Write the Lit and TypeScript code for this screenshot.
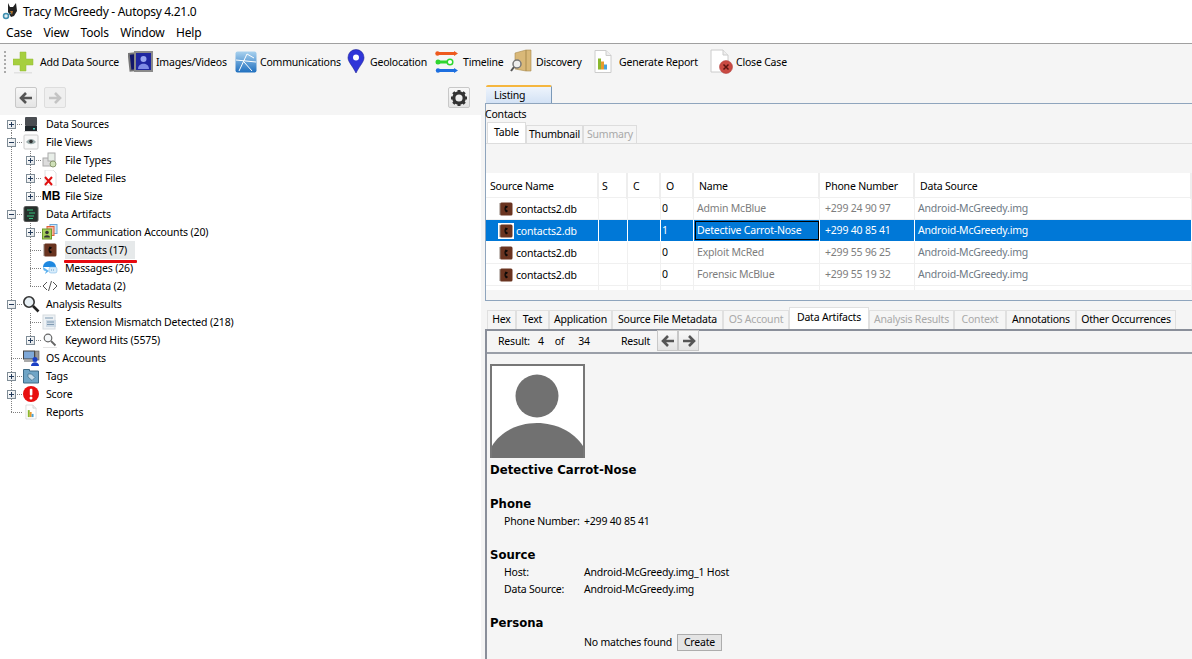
import { LitElement, html, css, svg } from 'lit';
import { customElement } from 'lit/decorators.js';

const page = (inner: unknown, w = 16, h = 16) => html`<svg width=${w} height=${h} viewBox="0 0 22 24">
  <path d="M3 1h11l5 5v17H3z" fill="#fff" stroke="#ccc"/><path d="M14 1v5h5" fill="#eee" stroke="#ccc"/>${inner}</svg>`;

const bars = svg`<rect x="6" y="9" width="3" height="11" fill="#8ab82e"/><rect x="9" y="12" width="3" height="8" fill="#e89a2c"/><rect x="12" y="15" width="3" height="5" fill="#4aa3d8"/>`;

const book = html`<svg width="14" height="14" viewBox="0 0 14 14">
  <rect x="1" y="0.500" width="12.500" height="13" rx="1.500" fill="#6a3420"/><path d="M1 1.500v11" stroke="#8d8078" stroke-width="2" stroke-dasharray="1 1"/>
  <path d="M6.500 3.500c-1.500 2.300-1.500 4.500.5 7l2-1.200-1.200-1.700-.8.300c-.3-.7-.3-1.400 0-2l.8.300 1.200-1.700z" fill="#0d0a08"/></svg>`;

const ICONS: Record<string, unknown> = {
  dog: html`<svg width="18" height="18" viewBox="0 0 18 18">
    <path d="M6 1l2 4h3l3-4 1 8-3 5-3 1-3-5z" fill="#222"/><path d="M8 9l3 0-1 4z" fill="#b5772f"/>
    <circle cx="4" cy="14" r="2.500" fill="#dcecf2" stroke="#3f8fb0" stroke-width="1.500"/><path d="M6 13l3-2" stroke="#3f8fb0"/></svg>`,
  plus: html`<svg width="21" height="24" viewBox="0 0 21 24">
    <path d="M7 2h6v7h7v6h-7v6H7v-6H0V9h7z" fill="#a6cf3f" stroke="#93b935" stroke-width=".5"/><rect x="1" y="22" width="18" height="1.500" fill="#e2e2e2"/></svg>`,
  images: html`<svg width="25" height="25" viewBox="0 0 25 25">
    <rect x="1.500" y="4" width="15" height="17" fill="#12166a" stroke="#777" stroke-width="2" transform="rotate(-6 9 12)"/>
    <rect x="7" y="3" width="17" height="19" fill="#1f26a0" stroke="#8a8a8a" stroke-width="2"/>
    <circle cx="15.500" cy="10" r="3" fill="#9aa6f0"/><path d="M10 20c0-7 11-7 11 0z" fill="#7f8be6"/></svg>`,
  comm: html`<svg width="22" height="22" viewBox="0 0 22 22">
    <defs><linearGradient id="cg" x1="0" y1="0" x2="0" y2="1"><stop offset="0" stop-color="#a9d2ef"/><stop offset="1" stop-color="#1f6fbf"/></linearGradient></defs>
    <rect x="0.500" y="0.500" width="21" height="21" rx="2" fill="url(#cg)"/>
    <path d="M4 20L12 3M1 9l20 2M9 11l8 9M12 3l7 4" stroke="#fff" stroke-width="1" fill="none"/></svg>`,
  geo: html`<svg width="20" height="25" viewBox="0 0 20 25">
    <path d="M10 24C6 16 2 13 2 8.500a8 8 0 0 1 16 0C18 13 14 16 10 24z" fill="#2f35d8" stroke="#1d2296" stroke-width=".6"/><circle cx="10" cy="8.500" r="3" fill="#fff"/></svg>`,
  timeline: html`<svg width="24" height="24" viewBox="0 0 24 24">
    <path d="M2 3.500h18" stroke="#ee5a1e" stroke-width="3"/><path d="M19 1l4 2.500-4 2.500z" fill="#ee5a1e"/><circle cx="2.500" cy="3.500" r="2.200" fill="#ee5a1e"/>
    <path d="M2 12h16" stroke="#2fd62f" stroke-width="3"/><circle cx="3" cy="12" r="2.500" fill="#2fd62f"/><circle cx="15" cy="12" r="2.800" fill="#fff" stroke="#2fd62f" stroke-width="1.500"/>
    <path d="M3 20.500h17" stroke="#1d6fe0" stroke-width="3"/><path d="M19 18l4 2.500-4 2.500z" fill="#1d6fe0"/><circle cx="3" cy="20.500" r="2.200" fill="#1d6fe0"/></svg>`,
  discovery: html`<svg width="22" height="25" viewBox="0 0 22 25">
    <path d="M5 4l11-3h5v21h-5L5 20z" fill="#d9b878" stroke="#a98b4f" stroke-width=".6"/><path d="M16 1v21" stroke="#a98b4f"/>
    <circle cx="7" cy="15" r="4" fill="#eee" stroke="#777" stroke-width="1.500"/><path d="M4 18l-3 4" stroke="#555" stroke-width="2"/></svg>`,
  report: page(bars, 22, 25),
  close: html`<svg width="23" height="25" viewBox="0 0 23 25">
    <path d="M1 1h12l5 5v17H1z" fill="#fff" stroke="#ccc"/><path d="M13 1v5h5" fill="#eee" stroke="#ccc"/>
    <circle cx="16" cy="18" r="6.500" fill="#c94a42" stroke="#a33" stroke-width=".5"/><path d="M13.500 15.500l5 5m0-5l-5 5" stroke="#5a1410" stroke-width="1.500"/></svg>`,
  db: html`<svg width="16" height="16" viewBox="0 0 16 16">
    <rect x="2" y="1" width="12" height="9" rx="1" fill="#4a4d52"/><rect x="2" y="10" width="12" height="5" fill="#20262b"/><rect x="10" y="12" width="2" height="1.500" fill="#4fd0c0"/><rect x="1" y="15" width="14" height="1" fill="#ddd"/></svg>`,
  eye: html`<svg width="16" height="16" viewBox="0 0 16 16">
    <rect x="1" y="1" width="14" height="14" rx="1" fill="#f8f8f8" stroke="#ccc"/><path d="M3 8c3-4 7-4 10 0-3 3-7 3-10 0z" fill="#9aa" /><circle cx="8" cy="7.500" r="1.800" fill="#333"/></svg>`,
  types: html`<svg width="16" height="16" viewBox="0 0 16 16">
    <rect x="1" y="6" width="8" height="8" fill="#ddd" stroke="#aaa"/><rect x="6" y="1" width="7" height="8" fill="#e8eee8" stroke="#aaa"/><circle cx="11" cy="12" r="3" fill="#cfe0b8" stroke="#8a9a70"/></svg>`,
  deleted: html`<svg width="16" height="16" viewBox="0 0 16 16">
    <path d="M3 0h8l3 3v13H3z" fill="#fff" stroke="#e0e0e0"/><path d="M3 7l7 8m0-8l-7 8" stroke="#e01010" stroke-width="2"/></svg>`,
  artifacts: html`<svg width="16" height="16" viewBox="0 0 16 16">
    <rect x="1" y="0.500" width="14" height="15" rx="1.500" fill="#26302c" stroke="#555"/><path d="M4 4h6M6 7h6M4 10h7M6 12.500h4" stroke="#35c07c" stroke-width="1.200"/></svg>`,
  accounts: html`<svg width="16" height="16" viewBox="0 0 16 16">
    <rect x="8" y="0.500" width="7" height="9" fill="#cfe6f7" stroke="#6ba8d8"/><rect x="5" y="2.500" width="7" height="9" fill="#f6b79e" stroke="#e0603c"/>
    <rect x="0.500" y="5" width="9" height="10" fill="#a6cf5a" stroke="#6e9a2c"/><circle cx="5" cy="8.500" r="1.800" fill="#333"/><path d="M2 13.500c0-3 6-3 6 0z" fill="#333"/></svg>`,
  contacts: book,
  messages: html`<svg width="16" height="16" viewBox="0 0 16 16">
    <path d="M1 7a6.500 6 0 0 1 13 0z" fill="#1e88e0"/><path d="M1 7c0 3 1 4 3 4l-1 3 4-3z" fill="#5fb2ef"/><rect x="7" y="7" width="8" height="6" rx="2" fill="#d7ecfb" stroke="#6fb1e4" stroke-width=".5"/><path d="M9 10h4" stroke="#6fa0c4" stroke-dasharray="1 1"/></svg>`,
  metadata: html`<svg width="16" height="16" viewBox="0 0 16 16" fill="none" stroke="#555">
    <path d="M5 4L1 8l4 4M11 4l4 4-4 4M9.500 3l-3 10"/></svg>`,
  search: html`<svg width="18" height="18" viewBox="0 0 18 18">
    <circle cx="7" cy="7" r="5.200" fill="#e8f0f5" stroke="#333" stroke-width="1.600"/><path d="M11 11l5.500 5.500" stroke="#222" stroke-width="2.600"/></svg>`,
  mismatch: html`<svg width="16" height="16" viewBox="0 0 16 16">
    <rect x="1" y="1" width="12" height="14" fill="#eef2f5" stroke="#d5dbe0"/><rect x="4" y="6" width="10" height="7" fill="#cfdbe6"/><path d="M3 4h8M5 8h7M5 10.500h7" stroke="#7f9ab2"/></svg>`,
  keyword: html`<svg width="16" height="16" viewBox="0 0 16 16">
    <circle cx="6" cy="6" r="3.800" fill="#f4f7f9" stroke="#666" stroke-width="1.200"/><path d="M9 9l4.500 4.500" stroke="#666" stroke-width="1.800"/><rect x="1" y="15" width="14" height="1" fill="#e4e4e4"/></svg>`,
  os: html`<svg width="17" height="16" viewBox="0 0 17 16">
    <rect x="0.500" y="1" width="11" height="8" fill="#7ea8d8" stroke="#444"/><rect x="12" y="1" width="4" height="9" fill="#999" stroke="#555" stroke-width=".6"/><rect x="1" y="10" width="10" height="2" fill="#aaa"/>
    <circle cx="12" cy="9.500" r="2.500" fill="#1b3fc4"/><path d="M8 16c0-5 8-5 8 0z" fill="#1b3fc4"/></svg>`,
  tags: html`<svg width="16" height="16" viewBox="0 0 16 16">
    <path d="M0.500 3V1.500h6V3h9v12H.5z" fill="#6fa5c6" stroke="#3e6a86"/><path d="M5 6h3.500L12 9.500 9 12.500 5 9z" fill="#c6dce9" stroke="#3e6a86" stroke-width=".7"/></svg>`,
  score: html`<svg width="16" height="16" viewBox="0 0 16 16">
    <circle cx="8" cy="8" r="8" fill="#e80f0f"/><rect x="6.800" y="2.800" width="2.600" height="6.800" rx="1" fill="#fff"/><circle cx="8" cy="12" r="1.500" fill="#fff"/></svg>`,
  reports: page(bars, 14, 16),
};

interface TreeRow { label: string; icon: string; level: 0 | 1; exp?: '+' | '-'; edge?: 'first' | 'last'; sel?: boolean }

const TREE: TreeRow[] = [
  { label: 'Data Sources', icon: 'db', level: 0, exp: '+', edge: 'first' },
  { label: 'File Views', icon: 'eye', level: 0, exp: '-' },
  { label: 'File Types', icon: 'types', level: 1, exp: '+' },
  { label: 'Deleted Files', icon: 'deleted', level: 1, exp: '+' },
  { label: 'File Size', icon: 'mb', level: 1, exp: '+', edge: 'last' },
  { label: 'Data Artifacts', icon: 'artifacts', level: 0, exp: '-' },
  { label: 'Communication Accounts (20)', icon: 'accounts', level: 1, exp: '+' },
  { label: 'Contacts (17)', icon: 'contacts', level: 1, sel: true },
  { label: 'Messages (26)', icon: 'messages', level: 1 },
  { label: 'Metadata (2)', icon: 'metadata', level: 1, edge: 'last' },
  { label: 'Analysis Results', icon: 'search', level: 0, exp: '-' },
  { label: 'Extension Mismatch Detected (218)', icon: 'mismatch', level: 1 },
  { label: 'Keyword Hits (5575)', icon: 'keyword', level: 1, exp: '+', edge: 'last' },
  { label: 'OS Accounts', icon: 'os', level: 0 },
  { label: 'Tags', icon: 'tags', level: 0, exp: '+' },
  { label: 'Score', icon: 'score', level: 0, exp: '+' },
  { label: 'Reports', icon: 'reports', level: 0, edge: 'last' },
];

// icon, label, item width, icon-to-label gap
const TOOLS: [string, string, number, number][] = [
  ['plus', 'Add Data Source', 115, 6], ['images', 'Images/Videos', 107, 3], ['comm', 'Communications', 111, 3], ['geo', 'Geolocation', 89, 4],
  ['timeline', 'Timeline', 75, 4], ['discovery', 'Discovery', 82, 4], ['report', 'Generate Report', 118, 5], ['close', 'Close Case', 90, 3],
];

const CONTACTS = [
  ['0', 'Admin McBlue', '+299 24 90 97'],
  ['1', 'Detective Carrot-Nose', '+299 40 85 41'],
  ['0', 'Exploit McRed', '+299 55 96 25'],
  ['0', 'Forensic McBlue', '+299 55 19 32'],
];

const VIEWER_TABS: [string, number, boolean?, boolean?][] = [
  ['Hex', 29], ['Text', 33], ['Application', 63], ['Source File Metadata', 111], ['OS Account', 66, true],
  ['Data Artifacts', 80, false, true], ['Analysis Results', 85, true], ['Context', 52, true], ['Annotations', 70], ['Other Occurrences', 100],
];

@customElement('app-root')
export class AppRoot extends LitElement {
  static styles = css`
    :host {
      display: block;
      width: 1192px;
      height: 659px;
      overflow: hidden;
      background: #f5f5f5;
      color: #000;
      font: 10.5px 'Noto Sans', sans-serif;
      letter-spacing: -0.2px;
    }
    svg { display: block; flex: none; }
    .title { height: 22px; background: #fff; display: flex; align-items: center; gap: 3px; padding-left: 2px; font-size: 12px; letter-spacing: -0.3px; }
    .menu { height: 21px; background: #fff; display: flex; align-items: center; gap: 11.500px; padding-left: 6px; font-size: 12px; letter-spacing: -0.2px; border-bottom: 1px solid #a0a0a0; }
    .toolbar { height: 36px; display: flex; align-items: center; padding-left: 4px; padding-bottom: 1px; box-sizing: border-box; }
    .grip { width: 2px; height: 22px; margin-right: 7px; background: repeating-linear-gradient(to bottom, #aaa 0 2px, transparent 2px 4px); }
    .tool { display: flex; align-items: center; gap: var(--g); width: var(--w); flex: none; }
    .main { display: grid; grid-template-columns: 481px 1fr; column-gap: 4px; height: 579px; }

    .nav { height: 35px; display: flex; align-items: center; padding: 0 11px 0 15px; gap: 7px; }
    .btn { width: 22px; height: 21px; box-sizing: border-box; border: 1px solid #c8c8c8; border-radius: 2px; background: linear-gradient(#f8f8f8, #e4e4e4); display: flex; align-items: center; justify-content: center; }
    .btn.off { background: #efefef; border-color: #ddd; }
    .gear { margin-left: auto; }
    .tree { background: #fff; height: 544px; }
    .row { display: flex; height: 18px; align-items: center; }
    .guide, .cell { height: 18px; flex: none; box-sizing: border-box; background-repeat: no-repeat; }
    .guide { width: 19px; background-image: repeating-linear-gradient(to bottom, #808080 0 1px, transparent 1px 2px); background-size: 1px 18px; background-position: 11px 0; }
    .cell { width: 23px; padding: 5px 0 0 7px;
      background-image: repeating-linear-gradient(to bottom, #808080 0 1px, transparent 1px 2px), repeating-linear-gradient(to right, #808080 0 1px, transparent 1px 2px);
      background-size: 1px 18px, 11px 1px; background-position: 11px 0, 11px 9px; }
    .cell.first { background-size: 1px 9px, 11px 1px; background-position: 11px 9px, 11px 9px; }
    .cell.last { background-size: 1px 10px, 11px 1px; }
    .box { width: 9px; height: 9px; box-sizing: border-box; border: 1px solid #7f8c96; background: linear-gradient(135deg, #fff, #dfe3e6); position: relative; }
    .box::before { content: ''; position: absolute; left: 1px; right: 1px; top: 3px; height: 1px; background: #223a5a; }
    .box.plus::after { content: ''; position: absolute; top: 1px; bottom: 1px; left: 3px; width: 1px; background: #223a5a; }
    .icon { width: 16px; height: 16px; display: flex; align-items: center; justify-content: center; flex: none; }
    .mb { font: bold 12px 'Liberation Sans', sans-serif; margin-left: 2px; letter-spacing: 0; }
    .label { margin-left: 7px; white-space: nowrap; height: 18px; line-height: 18px; align-self: flex-start; letter-spacing: -0.15px; }
    .label.sel { background: #e6e9ea; position: relative; min-width: 70px; }
    .label.sel::after { content: ''; position: absolute; left: -1px; right: -2px; bottom: -4px; height: 3px; border-radius: 1px; background: #e6090f; }

    .right { display: flex; flex-direction: column; min-width: 0; }
    .strip { height: 23px; display: flex; align-items: flex-end; padding-left: 1px; flex: none; }
    .listing-tab { width: 66px; height: 18px; box-sizing: border-box; padding-left: 8px; line-height: 16px; border-top: 2px solid #f5b63f; border-right: 1px solid #7b99b8; border-radius: 2px 2px 0 0; background: linear-gradient(#eef4fc, #d3e2f5); }
    .listing { height: 198px; box-sizing: border-box; border: solid #8fa5bd; border-width: 1px 0 1px 1px; display: flex; flex-direction: column; flex: none; }
    .caption { height: 18px; line-height: 20px; flex: none; margin-left: -1px; }
    .subtabs { height: 21px; display: flex; align-items: flex-end; border-bottom: 1px solid #ddd; padding-left: 1px; flex: none; }
    .subtab { height: 18px; line-height: 17px; text-align: center; box-sizing: border-box; border: 1px solid #ddd; border-bottom: none; width: var(--w); }
    .subtab.on { height: 21px; background: #fff; line-height: 18px; }
    .muted { color: #a9a9a9; }
    .spacer { height: 29px; flex: none; }
    .table { height: 117px; background: #fff; flex: none; overflow: hidden; }
    .tr { display: grid; grid-template-columns: 113px 29px 33px 33px 126px 95px 1fr; height: 22px; box-sizing: border-box; border-bottom: 1px solid #f0f0f0; }
    .tr > div { line-height: 20px; border-right: 1px solid #f0f0f0; padding-left: 3px; white-space: nowrap; box-sizing: border-box; }
    .tr.head { height: 25px; }
    .tr.head > div { line-height: 26px; border-right: 2px solid #eee; padding-left: 5px; }
    .tr.head > div:first-child { padding-left: 4px; }
    .tr.head > div:nth-child(2) { padding-left: 3px; }
    .tr .src { display: flex; align-items: center; gap: 3px; padding-left: 13px; }
    .tr .num { padding-left: 1px; }
    .tr .dim { color: #7d7d7d; }
    .tr .ds { color: #6e7984; }
    .tr .ph { padding-left: 5px; }
    .tr.sel { background: #0078d7; color: #fff; border-bottom-color: #fff; }
    .tr.sel > div { color: #fff; border-right-color: #fff; }
    .tr.sel .thumb { background: #fff; padding: 1px; margin: -1px; }
    .tr.sel .focus { outline: 1px solid #000; outline-offset: -2px; }
    .tr.stub { height: 6px; border-bottom: 0; }

    .vtabs { height: 21px; margin-top: 7px; display: flex; align-items: flex-end; padding-left: 2px; flex: none; }
    .vtab { height: 19px; line-height: 17px; box-sizing: border-box; text-align: center; border: 1px solid #e0e0e0; border-bottom: none; }
    .vtab.muted { line-height: 16px; }
    .vtab.on { height: 22px; background: #fff; line-height: 18px; }
    .viewer { border-top: 2px solid #8a8f9a; border-left: 2px solid #8a8f9a; flex: 1; display: flex; flex-direction: column; min-height: 0; }
    .bar { height: 23px; box-sizing: border-box; border-bottom: 2px solid #9a9fa8; display: flex; align-items: center; padding: 0 0 2px 11px; flex: none; }
    .bar span { flex: none; }
    .group { display: flex; margin-left: 7px; }
    .group .btn { width: 21px; border-radius: 0; }
    .detail { padding: 10px 0 0 3px; }
    .photo { width: 95px; height: 94px; box-sizing: border-box; border: 2px solid #777; border-bottom: none; background: #fff; overflow: hidden; }
    h2 { font: bold 11.700px 'DejaVu Sans', sans-serif; margin: 0; line-height: 16px; letter-spacing: 0; }
    .name { margin-top: 4px; }
    .section { margin-top: 18px; }
    .kv { display: grid; grid-template-columns: 80px 1fr; padding-left: 14px; line-height: 17px; white-space: nowrap; margin: 1px 0 -1px; }
    .persona { display: flex; align-items: center; gap: 6px; padding-left: 94px; height: 20px; margin-top: 1px; }
    .create { width: 45px; height: 17px; line-height: 15px; text-align: center; box-sizing: border-box; border: 1px solid #adadad; background: #e4e4e4; margin-left: -1px; }
  `;

  private renderTreeRow(r: TreeRow) {
    return html`<div class="row">
      ${r.level === 1 ? html`<div class="guide"></div>` : ''}
      <div class="cell ${r.edge ?? ''}">
        ${r.exp ? html`<div class="box ${r.exp === '+' ? 'plus' : ''}"></div>` : ''}
      </div>
      <div class="icon">${r.icon === 'mb' ? html`<span class="mb">MB</span>` : ICONS[r.icon]}</div>
      <span class="label ${r.sel ? 'sel' : ''}">${r.label}</span>
    </div>`;
  }

  private arrow(dir: 'l' | 'r', color: string) {
    const d = dir === 'l' ? 'M8 2L3 7l5 5M3.500 7H14' : 'M8 2l5 5-5 5M12.500 7H2';
    return html`<svg width="16" height="14" viewBox="0 0 16 14"><path d=${d} fill="none" stroke=${color} stroke-width="2.600"/></svg>`;
  }

  render() {
    return html`
      <div class="title">${ICONS.dog}<span>Tracy McGreedy - Autopsy 4.21.0</span></div>
      <div class="menu">${['Case', 'View', 'Tools', 'Window', 'Help'].map((m) => html`<span>${m}</span>`)}</div>
      <div class="toolbar">
        <div class="grip"></div>
        ${TOOLS.map(([ic, label, w, g]) => html`<div class="tool" style="--w:${w}px;--g:${g}px">${ICONS[ic]}<span>${label}</span></div>`)}
      </div>
      <div class="main">
        <div>
          <div class="nav">
            <div class="btn">${this.arrow('l', '#555')}</div>
            <div class="btn off">${this.arrow('r', '#c4c4c4')}</div>
            <div class="btn gear">
              <svg width="18" height="18" viewBox="0 0 18 18"><circle cx="9" cy="9" r="5.200" fill="none" stroke="#333" stroke-width="3.200"/><path d="M9 1v3M9 14v3M1 9h3M14 9h3M3.300 3.300l2.100 2.100M12.600 12.600l2.100 2.100M3.300 14.700l2.100-2.100M12.600 5.400l2.100-2.100" stroke="#333" stroke-width="3"/></svg>
            </div>
          </div>
          <div class="tree">${TREE.map((r) => this.renderTreeRow(r))}</div>
        </div>
        <div class="right">
          <div class="strip"><div class="listing-tab">Listing</div></div>
          <div class="listing">
            <div class="caption">Contacts</div>
            <div class="subtabs">
              <div class="subtab on" style="--w:39px">Table</div>
              <div class="subtab" style="--w:57px">Thumbnail</div>
              <div class="subtab muted" style="--w:54px">Summary</div>
            </div>
            <div class="spacer"></div>
            <div class="table">
              <div class="tr head">
                ${['Source Name', 'S', 'C', 'O', 'Name', 'Phone Number', 'Data Source'].map((h) => html`<div>${h}</div>`)}
              </div>
              ${CONTACTS.map(([o, name, phone], i) => html`
                <div class="tr ${i === 1 ? 'sel' : ''}">
                  <div class="src"><span class="thumb">${book}</span>contacts2.db</div>
                  <div></div><div></div>
                  <div class="num">${o}</div>
                  <div class="dim focus">${name}</div>
                  <div class="dim ph">${phone}</div>
                  <div class="ds">Android-McGreedy.img</div>
                </div>`)}
              <div class="tr stub"><div></div><div></div><div></div><div></div><div></div><div></div><div></div></div>
            </div>
          </div>
          <div class="vtabs">
            ${VIEWER_TABS.map(([t, w, off, on]) => html`<div class="vtab ${off ? 'muted' : ''} ${on ? 'on' : ''}" style="width:${w}px">${t}</div>`)}
          </div>
          <div class="viewer">
            <div class="bar">
              <span>Result:</span><span style="margin-left:8px">4</span><span style="margin-left:11px">of</span><span style="margin-left:14px">34</span><span style="margin-left:31px">Result</span>
              <div class="group">
                <div class="btn">${this.arrow('l', '#555')}</div>
                <div class="btn">${this.arrow('r', '#555')}</div>
              </div>
            </div>
            <div class="detail">
              <div class="photo">
                <svg width="91" height="92" viewBox="0 0 91 92"><circle cx="45" cy="30" r="21.500" fill="#717171"/><path d="M0 92V80C8 66 26 57 45 57s37 9 46 23v12z" fill="#717171"/></svg>
              </div>
              <h2 class="name">Detective Carrot-Nose</h2>
              <h2 class="section">Phone</h2>
              <div class="kv"><span>Phone Number:</span><span>+299 40 85 41</span></div>
              <h2 class="section">Source</h2>
              <div class="kv"><span>Host:</span><span>Android-McGreedy.img_1 Host</span><span>Data Source:</span><span>Android-McGreedy.img</span></div>
              <h2 class="section">Persona</h2>
              <div class="persona"><span>No matches found</span><div class="create">Create</div></div>
            </div>
          </div>
        </div>
      </div>
    `;
  }
}
